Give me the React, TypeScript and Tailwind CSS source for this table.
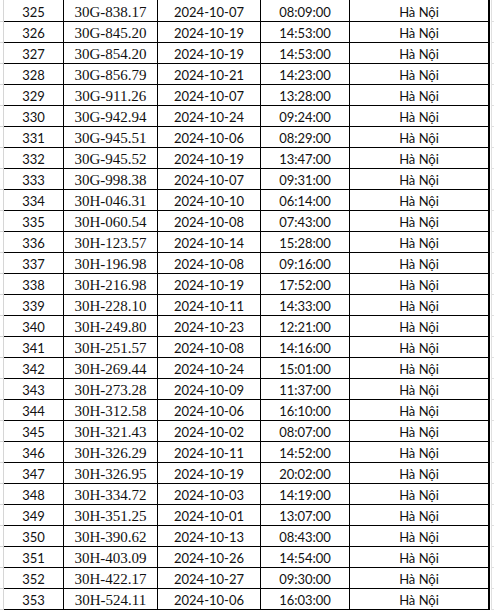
import React from "react";

const rows: [string, string, string, string][] = [
  ["325", "30G-838.17", "2024-10-07", "08:09:00"],
  ["326", "30G-845.20", "2024-10-19", "14:53:00"],
  ["327", "30G-854.20", "2024-10-19", "14:53:00"],
  ["328", "30G-856.79", "2024-10-21", "14:23:00"],
  ["329", "30G-911.26", "2024-10-07", "13:28:00"],
  ["330", "30G-942.94", "2024-10-24", "09:24:00"],
  ["331", "30G-945.51", "2024-10-06", "08:29:00"],
  ["332", "30G-945.52", "2024-10-19", "13:47:00"],
  ["333", "30G-998.38", "2024-10-07", "09:31:00"],
  ["334", "30H-046.31", "2024-10-10", "06:14:00"],
  ["335", "30H-060.54", "2024-10-08", "07:43:00"],
  ["336", "30H-123.57", "2024-10-14", "15:28:00"],
  ["337", "30H-196.98", "2024-10-08", "09:16:00"],
  ["338", "30H-216.98", "2024-10-19", "17:52:00"],
  ["339", "30H-228.10", "2024-10-11", "14:33:00"],
  ["340", "30H-249.80", "2024-10-23", "12:21:00"],
  ["341", "30H-251.57", "2024-10-08", "14:16:00"],
  ["342", "30H-269.44", "2024-10-24", "15:01:00"],
  ["343", "30H-273.28", "2024-10-09", "11:37:00"],
  ["344", "30H-312.58", "2024-10-06", "16:10:00"],
  ["345", "30H-321.43", "2024-10-02", "08:07:00"],
  ["346", "30H-326.29", "2024-10-11", "14:52:00"],
  ["347", "30H-326.95", "2024-10-19", "20:02:00"],
  ["348", "30H-334.72", "2024-10-03", "14:19:00"],
  ["349", "30H-351.25", "2024-10-01", "13:07:00"],
  ["350", "30H-390.62", "2024-10-13", "08:43:00"],
  ["351", "30H-403.09", "2024-10-26", "14:54:00"],
  ["352", "30H-422.17", "2024-10-27", "09:30:00"],
  ["353", "30H-524.11", "2024-10-06", "16:03:00"],
];

const sans = "font-['Lato',_'Liberation_Sans',_sans-serif] text-[13px]";
const serif = "font-['Liberation_Serif',_'Times_New_Roman',_serif] text-[15px]";
const cell =
  "flex items-end justify-center leading-[16px] pb-[1px] border-b border-black text-[#111] whitespace-nowrap";

export default function App() {
  return (
    <div className="w-[494px] h-[612px] overflow-hidden bg-white">
      <div className="flex flex-col">
        {rows.map((r) => (
          <div key={r[0]} className="flex h-[21px] shrink-0 first:h-[22px]">
            <div className="w-[4px] shrink-0 border-r border-b border-[#d6d6d6]" />
            <div className={`${cell} ${sans} w-[60px] shrink-0 border-r`}>{r[0]}</div>
            <div className={`${cell} ${serif} w-[94px] shrink-0 border-r`}>{r[1]}</div>
            <div className={`${cell} ${sans} w-[103px] shrink-0 border-r`}>{r[2]}</div>
            <div className={`${cell} ${sans} w-[89px] shrink-0 border-r`}>{r[3]}</div>
            <div className={`${cell} ${sans} w-[140px] shrink-0 border-r-2`}>Hà Nội</div>
            <div className="w-[1px] shrink-0" />
            <div className="flex-1 border-l border-b border-[#e0e0e0]" />
          </div>
        ))}
      </div>
    </div>
  );
}
